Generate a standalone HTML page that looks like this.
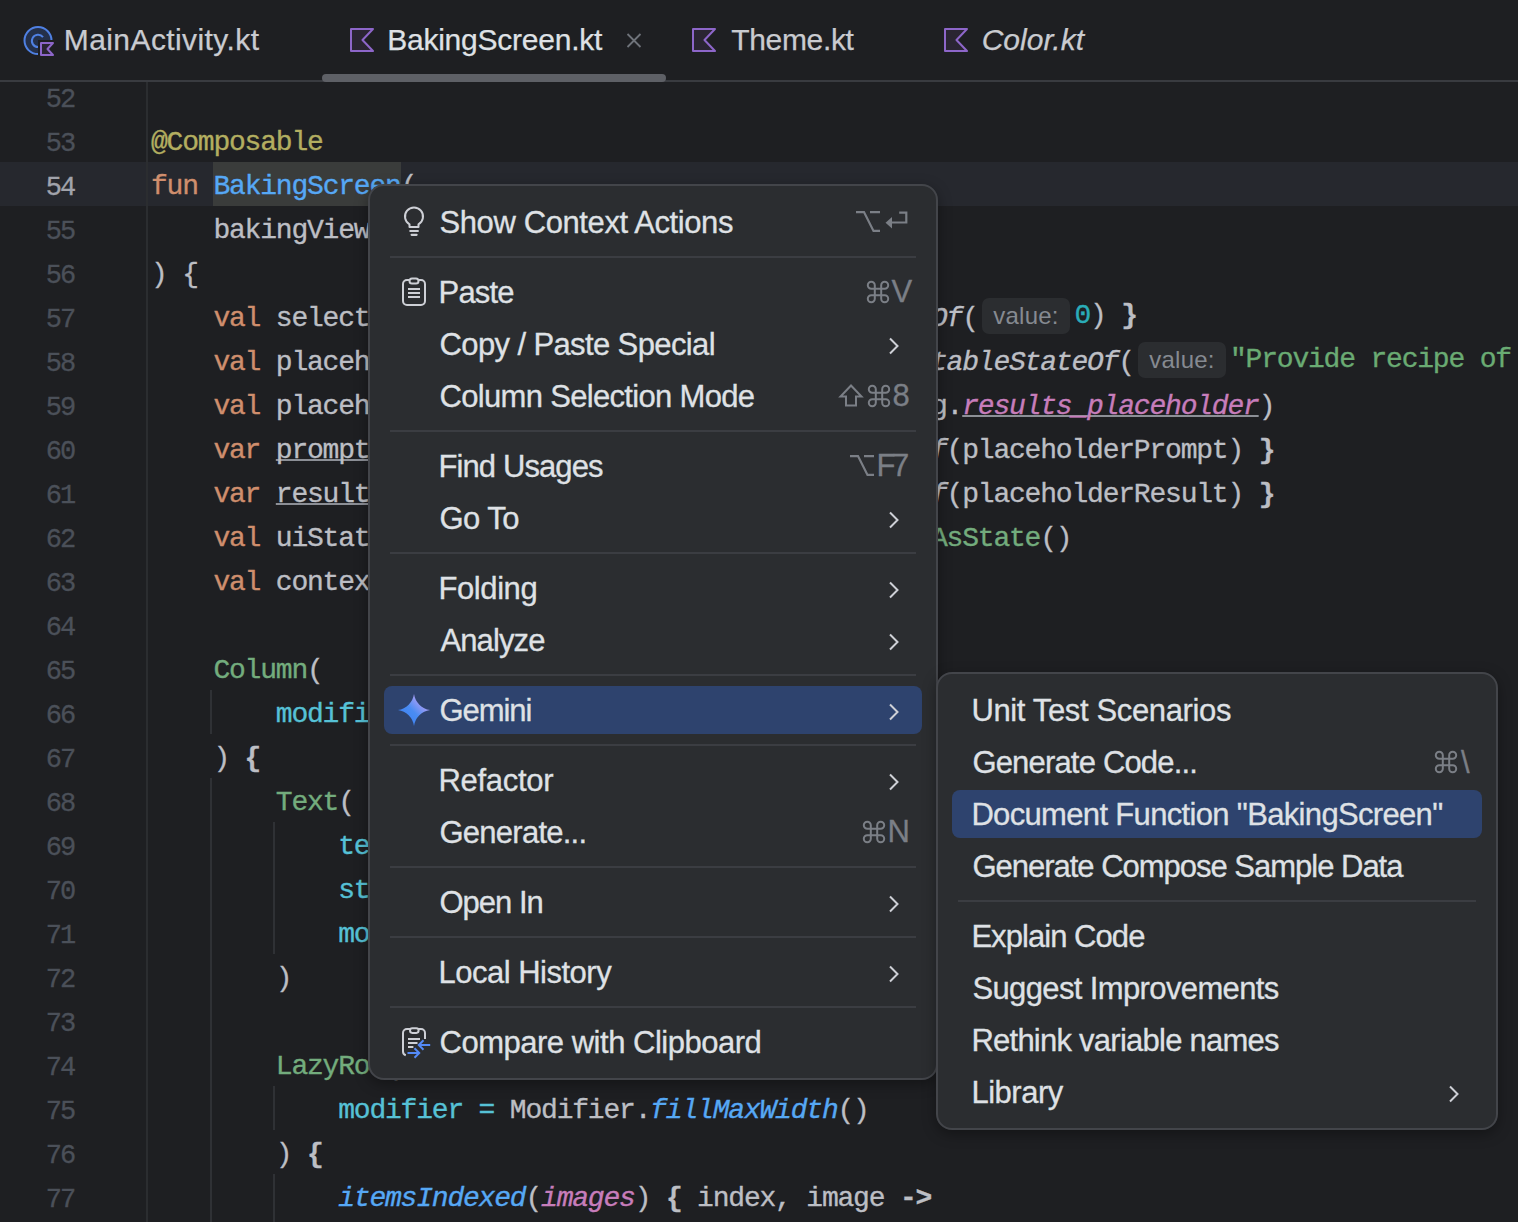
<!DOCTYPE html>
<html><head><meta charset="utf-8"><style>
html,body{margin:0;padding:0}
body{width:1518px;height:1222px;overflow:hidden;position:relative;background:#1e1f22;font-family:"Liberation Sans",sans-serif}
.cl{position:absolute;height:44px;line-height:44px;white-space:pre;font-family:"Liberation Mono",monospace;font-size:28px;letter-spacing:-1.2px;color:#bcbec4;-webkit-text-stroke:0.35px currentColor}
.ln{position:absolute;left:0;width:74.5px;text-align:right;height:44px;line-height:44px;font-family:"Liberation Mono",monospace;font-size:27px;letter-spacing:-1.8px;-webkit-text-stroke:0.3px currentColor}
.tab{position:absolute;top:18.2px;height:44px;line-height:44px;font-size:30px;color:#c9cbd0;white-space:pre;-webkit-text-stroke:0.25px currentColor}
.menu{position:absolute;box-sizing:border-box;background:#2b2d30;border:2px solid #43454a;border-radius:16px;box-shadow:0 4px 14px rgba(0,0,0,0.35)}
.mt{position:absolute;height:44px;line-height:44px;font-size:31px;white-space:pre;-webkit-text-stroke:0.3px currentColor}
.hint{position:absolute;height:36px;line-height:35px;width:88px;letter-spacing:0.25px;text-align:center;border-radius:7px;background:#2b2d30;color:#868a91;font-size:24px}
</style></head>
<body>
<div style="position:absolute;left:0;top:162px;width:1518px;height:44px;background:#26282e"></div>
<div style="position:absolute;left:213.4px;top:162px;width:187.2px;height:44px;background:#3a3c3b"></div>
<div style="position:absolute;left:146px;top:81px;width:2px;height:1141px;background:#2b2d30"></div>
<div style="position:absolute;left:210.4px;top:690px;width:2px;height:44px;background:#2f3135"></div>
<div style="position:absolute;left:210.4px;top:778px;width:2px;height:572px;background:#2f3135"></div>
<div style="position:absolute;left:272.8px;top:822px;width:2px;height:132px;background:#2f3135"></div>
<div style="position:absolute;left:272.8px;top:1086px;width:2px;height:44px;background:#2f3135"></div>
<div style="position:absolute;left:272.8px;top:1174px;width:2px;height:176px;background:#2f3135"></div>
<div class="ln" style="top:77.6px;color:#4b5059">52</div>
<div class="ln" style="top:121.6px;color:#4b5059">53</div>
<div class="ln" style="top:165.6px;color:#a1a3ab">54</div>
<div class="ln" style="top:209.6px;color:#4b5059">55</div>
<div class="ln" style="top:253.6px;color:#4b5059">56</div>
<div class="ln" style="top:297.6px;color:#4b5059">57</div>
<div class="ln" style="top:341.6px;color:#4b5059">58</div>
<div class="ln" style="top:385.6px;color:#4b5059">59</div>
<div class="ln" style="top:429.6px;color:#4b5059">60</div>
<div class="ln" style="top:473.6px;color:#4b5059">61</div>
<div class="ln" style="top:517.6px;color:#4b5059">62</div>
<div class="ln" style="top:561.6px;color:#4b5059">63</div>
<div class="ln" style="top:605.6px;color:#4b5059">64</div>
<div class="ln" style="top:649.6px;color:#4b5059">65</div>
<div class="ln" style="top:693.6px;color:#4b5059">66</div>
<div class="ln" style="top:737.6px;color:#4b5059">67</div>
<div class="ln" style="top:781.6px;color:#4b5059">68</div>
<div class="ln" style="top:825.6px;color:#4b5059">69</div>
<div class="ln" style="top:869.6px;color:#4b5059">70</div>
<div class="ln" style="top:913.6px;color:#4b5059">71</div>
<div class="ln" style="top:957.6px;color:#4b5059">72</div>
<div class="ln" style="top:1001.6px;color:#4b5059">73</div>
<div class="ln" style="top:1045.6px;color:#4b5059">74</div>
<div class="ln" style="top:1089.6px;color:#4b5059">75</div>
<div class="ln" style="top:1133.6px;color:#4b5059">76</div>
<div class="ln" style="top:1177.6px;color:#4b5059">77</div>
<div class="cl" style="left:151.00px;top:121px"><span style="color:#b3ae60;">@Composable</span></div>
<div class="cl" style="left:151.00px;top:165px"><span style="color:#cf8e6d;">fun </span><span style="color:#56a8f5;">BakingScreen</span><span style="color:#bcbec4;">(</span></div>
<div class="cl" style="left:213.40px;top:209px"><span style="color:#bcbec4;">bakingViewModel</span></div>
<div class="cl" style="left:151.00px;top:253px"><span style="color:#bcbec4;">) {</span></div>
<div class="cl" style="left:213.40px;top:297px"><span style="color:#cf8e6d;">val</span><span style="color:#bcbec4;"> selectedImage</span></div>
<div class="cl" style="left:213.40px;top:341px"><span style="color:#cf8e6d;">val</span><span style="color:#bcbec4;"> placeholderPrompt</span></div>
<div class="cl" style="left:213.40px;top:385px"><span style="color:#cf8e6d;">val</span><span style="color:#bcbec4;"> placeholderResult</span></div>
<div class="cl" style="left:213.40px;top:429px"><span style="color:#cf8e6d;">var</span><span style="color:#bcbec4;"> </span><span style="color:#bcbec4;text-decoration:underline;text-decoration-color:#8c8f96;text-underline-offset:1px;text-decoration-thickness:2px;text-decoration-skip-ink:none;">prompt</span></div>
<div class="cl" style="left:213.40px;top:473px"><span style="color:#cf8e6d;">var</span><span style="color:#bcbec4;"> </span><span style="color:#bcbec4;text-decoration:underline;text-decoration-color:#8c8f96;text-underline-offset:1px;text-decoration-thickness:2px;text-decoration-skip-ink:none;">result</span></div>
<div class="cl" style="left:213.40px;top:517px"><span style="color:#cf8e6d;">val</span><span style="color:#bcbec4;"> uiState</span></div>
<div class="cl" style="left:213.40px;top:561px"><span style="color:#cf8e6d;">val</span><span style="color:#bcbec4;"> context</span></div>
<div class="cl" style="left:213.40px;top:649px"><span style="color:#73ac7d;">Column</span><span style="color:#bcbec4;">(</span></div>
<div class="cl" style="left:275.80px;top:693px"><span style="color:#56c1d6;">modifier</span></div>
<div class="cl" style="left:213.40px;top:737px"><span style="color:#bcbec4;">) </span><span style="color:#bcbec4;font-weight:bold;">{</span></div>
<div class="cl" style="left:275.80px;top:781px"><span style="color:#73ac7d;">Text</span><span style="color:#bcbec4;">(</span></div>
<div class="cl" style="left:338.20px;top:825px"><span style="color:#56c1d6;">text</span></div>
<div class="cl" style="left:338.20px;top:869px"><span style="color:#56c1d6;">style</span></div>
<div class="cl" style="left:338.20px;top:913px"><span style="color:#56c1d6;">modifier</span></div>
<div class="cl" style="left:275.80px;top:957px"><span style="color:#bcbec4;">)</span></div>
<div class="cl" style="left:275.80px;top:1045px"><span style="color:#73ac7d;">LazyRow</span><span style="color:#bcbec4;">(</span></div>
<div class="cl" style="left:338.20px;top:1089px"><span style="color:#56c1d6;">modifier = </span><span style="color:#bcbec4;">Modifier.</span><span style="color:#56a8f5;font-style:italic;">fillMaxWidth</span><span style="color:#bcbec4;">()</span></div>
<div class="cl" style="left:275.80px;top:1133px"><span style="color:#bcbec4;">) </span><span style="color:#bcbec4;font-weight:bold;">{</span></div>
<div class="cl" style="left:338.20px;top:1177px"><span style="color:#56a8f5;font-style:italic;">itemsIndexed</span><span style="color:#bcbec4;">(</span><span style="color:#c77dbb;font-style:italic;">images</span><span style="color:#bcbec4;">) </span><span style="color:#bcbec4;font-weight:bold;">{</span><span style="color:#bcbec4;"> index, image </span><span style="color:#bcbec4;font-weight:bold;">-&gt;</span></div>
<div class="cl" style="left:931.00px;top:297px"><span style="color:#bcbec4;font-style:italic;">Of</span><span style="color:#bcbec4;">(</span></div>
<div class="cl" style="left:931.00px;top:341px"><span style="color:#bcbec4;font-style:italic;">tableStateOf</span><span style="color:#bcbec4;">(</span></div>
<div class="cl" style="left:931.00px;top:385px"><span style="color:#bcbec4;">g.</span><span style="color:#c77dbb;font-style:italic;text-decoration:underline;text-decoration-color:#8c8f96;text-underline-offset:1px;text-decoration-thickness:2px;text-decoration-skip-ink:none;">results_placeholder</span><span style="color:#bcbec4;">)</span></div>
<div class="cl" style="left:931.00px;top:429px"><span style="color:#bcbec4;font-style:italic;">f</span><span style="color:#bcbec4;">(placeholderPrompt) </span><span style="color:#bcbec4;font-weight:bold;">}</span></div>
<div class="cl" style="left:931.00px;top:473px"><span style="color:#bcbec4;font-style:italic;">f</span><span style="color:#bcbec4;">(placeholderResult) </span><span style="color:#bcbec4;font-weight:bold;">}</span></div>
<div class="cl" style="left:931.00px;top:517px"><span style="color:#73ac7d;">AsState</span><span style="color:#bcbec4;">()</span></div>
<div class="hint" style="left:982px;top:298px">value:</div>
<div class="cl" style="left:1074.5px;top:294px"><span style="color:#2aacb8;">0</span><span style="color:#bcbec4;">) </span><span style="color:#bcbec4;font-weight:bold;">}</span></div>
<div class="hint" style="left:1138px;top:342px">value:</div>
<div class="cl" style="left:1230px;top:338px"><span style="color:#6aab73;">"Provide recipe of the</span></div>
<div style="position:absolute;left:0;top:0;width:1518px;height:80px;background:#1e1f22"></div>
<div style="position:absolute;left:0;top:80px;width:1518px;height:2px;background:#393b40"></div>
<div style="position:absolute;left:322px;top:74px;width:344px;height:8px;border-radius:4px;background:#5e6066"></div>
<svg style="position:absolute;left:22px;top:24px" width="34" height="34" viewBox="0 0 34 34"><circle cx="16" cy="16.6" r="13.5" fill="#24304a" stroke="#4f80e3" stroke-width="2"/><path d="M21 13.1 A6.2 6.2 0 1 0 16 23.1" fill="none" stroke="#4f80e3" stroke-width="2"/><rect x="16" y="16" width="18" height="18" fill="#1e1f22"/><path d="M19 19 H31 L25.5 25 L31 31 H19 Z" fill="#2a2532" stroke="#8d66c9" stroke-width="2" stroke-linejoin="round"/></svg>
<div class="tab" style="left:63.8px;letter-spacing:0.411px;">MainActivity.kt</div>
<svg style="position:absolute;left:350px;top:28px" width="24" height="24" viewBox="0 0 24 24"><path d="M1 1 H23 L12.5 12 L23 23 H1 Z" fill="#2a2532" stroke="#8d66c9" stroke-width="2" stroke-linejoin="round"/></svg>
<div class="tab" style="left:387.2px;letter-spacing:-0.236px;color:#dfe1e5;">BakingScreen.kt</div>
<svg style="position:absolute;left:626px;top:33px" width="16" height="15" viewBox="0 0 16 15"><path d="M1.5 1 L14.5 14 M14.5 1 L1.5 14" stroke="#6f737a" stroke-width="1.8"/></svg>
<svg style="position:absolute;left:692px;top:28px" width="24" height="24" viewBox="0 0 24 24"><path d="M1 1 H23 L12.5 12 L23 23 H1 Z" fill="#2a2532" stroke="#8d66c9" stroke-width="2" stroke-linejoin="round"/></svg>
<div class="tab" style="left:731.2px;letter-spacing:-0.329px;">Theme.kt</div>
<svg style="position:absolute;left:944px;top:28px" width="24" height="24" viewBox="0 0 24 24"><path d="M1 1 H23 L12.5 12 L23 23 H1 Z" fill="#2a2532" stroke="#8d66c9" stroke-width="2" stroke-linejoin="round"/></svg>
<div class="tab" style="left:981.7px;letter-spacing:0.014px;font-style:italic;">Color.kt</div>
<div class="menu" style="left:368px;top:184px;width:570px;height:896px"></div>
<div class="mt" style="left:439.5px;top:200.7px;letter-spacing:-0.4px;color:#dfe1e5">Show Context Actions</div>
<svg style="position:absolute;left:856px;top:211px;overflow:visible" width="24" height="21" viewBox="0 0 24 21"><path d="M0 1.1 H8 L17.5 19.9 H24 M14 1.1 H24" fill="none" stroke="#7b7f86" stroke-width="2.2"/></svg><svg style="position:absolute;left:886px;top:211px;overflow:visible" width="23" height="18" viewBox="0 0 23 18"><path d="M13.2 1.6 H20.3 V11.5 H5.6" fill="none" stroke="#7b7f86" stroke-width="2.2"/><path d="M-0.5 11.7 L6 5.9 V17.5 Z" fill="#7b7f86"/></svg>
<svg style="position:absolute;left:400px;top:204px;overflow:visible" width="28" height="34" viewBox="0 0 28 34"><path d="M9.5 23 V20.3 A9 9 0 1 1 18.5 20.3 V23 Z" fill="none" stroke="#ced0d6" stroke-width="2" stroke-linejoin="round"/><path d="M10.3 27 H17.9 M11.6 30.8 H16.6" stroke="#ced0d6" stroke-width="2.2" stroke-linecap="round"/></svg>
<div style="position:absolute;left:390px;top:256px;width:526px;height:2px;background:#3b3d42"></div>
<div class="mt" style="left:438.5px;top:270.7px;letter-spacing:-0.8px;color:#dfe1e5">Paste</div>
<svg style="position:absolute;left:867px;top:280.5px;overflow:visible" width="22" height="22" viewBox="0 0 22 22"><path d="M7.8 17.7 V4.3 A3.5 3.5 0 1 0 4.3 7.8 H17.7 A3.5 3.5 0 1 0 14.2 4.3 V17.7 A3.5 3.5 0 1 0 17.7 14.2 H4.3 A3.5 3.5 0 1 0 7.8 17.7 Z" fill="none" stroke="#7b7f86" stroke-width="2"/></svg><div class="mt" style="left:891.5px;top:270.2px;color:#7b7f86">V</div>
<svg style="position:absolute;left:400px;top:276px;overflow:visible" width="28" height="32" viewBox="0 0 28 32"><rect x="3" y="4" width="22" height="25" rx="4" fill="none" stroke="#ced0d6" stroke-width="2"/><rect x="9.5" y="2.5" width="9" height="5" rx="2.5" fill="#2b2d30" stroke="#ced0d6" stroke-width="2"/><path d="M8 13 H20 M8 17 H20 M8 21 H20" stroke="#ced0d6" stroke-width="2"/></svg>
<div class="mt" style="left:439.5px;top:322.7px;letter-spacing:-0.616px;color:#dfe1e5">Copy / Paste Special</div>
<svg style="position:absolute;left:887.5px;top:336.8px" width="12" height="18" viewBox="0 0 12 18"><path d="M2 1.5 L9.5 9 L2 16.5" fill="none" stroke="#ced0d6" stroke-width="2"/></svg>
<div class="mt" style="left:439.5px;top:374.7px;letter-spacing:-0.68px;color:#dfe1e5">Column Selection Mode</div>
<svg style="position:absolute;left:838.6px;top:383.5px;overflow:visible" width="24" height="23" viewBox="0 0 24 23"><path d="M12 1.5 L22.5 12.5 H17 V21.5 H7 V12.5 H1.5 Z" fill="none" stroke="#7b7f86" stroke-width="2" stroke-linejoin="miter"/></svg><svg style="position:absolute;left:868px;top:384.5px;overflow:visible" width="22" height="22" viewBox="0 0 22 22"><path d="M7.8 17.7 V4.3 A3.5 3.5 0 1 0 4.3 7.8 H17.7 A3.5 3.5 0 1 0 14.2 4.3 V17.7 A3.5 3.5 0 1 0 17.7 14.2 H4.3 A3.5 3.5 0 1 0 7.8 17.7 Z" fill="none" stroke="#7b7f86" stroke-width="2"/></svg><div class="mt" style="left:892.5px;top:374.2px;color:#7b7f86">8</div>
<div style="position:absolute;left:390px;top:430px;width:526px;height:2px;background:#3b3d42"></div>
<div class="mt" style="left:438.5px;top:444.7px;letter-spacing:-0.9px;color:#dfe1e5">Find Usages</div>
<svg style="position:absolute;left:850px;top:455px;overflow:visible" width="24" height="21" viewBox="0 0 24 21"><path d="M0 1.1 H8 L17.5 19.9 H24 M14 1.1 H24" fill="none" stroke="#7b7f86" stroke-width="2.2"/></svg><div class="mt" style="left:876.5px;top:444.2px;color:#7b7f86">F</div><div class="mt" style="left:892px;top:444.2px;color:#7b7f86">7</div>
<div class="mt" style="left:439.5px;top:496.7px;letter-spacing:-0.55px;color:#dfe1e5">Go To</div>
<svg style="position:absolute;left:887.5px;top:510.8px" width="12" height="18" viewBox="0 0 12 18"><path d="M2 1.5 L9.5 9 L2 16.5" fill="none" stroke="#ced0d6" stroke-width="2"/></svg>
<div style="position:absolute;left:390px;top:552px;width:526px;height:2px;background:#3b3d42"></div>
<div class="mt" style="left:438.5px;top:566.7px;letter-spacing:-0.417px;color:#dfe1e5">Folding</div>
<svg style="position:absolute;left:887.5px;top:580.8px" width="12" height="18" viewBox="0 0 12 18"><path d="M2 1.5 L9.5 9 L2 16.5" fill="none" stroke="#ced0d6" stroke-width="2"/></svg>
<div class="mt" style="left:440.5px;top:618.7px;letter-spacing:-0.9px;color:#dfe1e5">Analyze</div>
<svg style="position:absolute;left:887.5px;top:632.8px" width="12" height="18" viewBox="0 0 12 18"><path d="M2 1.5 L9.5 9 L2 16.5" fill="none" stroke="#ced0d6" stroke-width="2"/></svg>
<div style="position:absolute;left:390px;top:674px;width:526px;height:2px;background:#3b3d42"></div>
<div style="position:absolute;left:384px;top:686px;width:538px;height:48px;border-radius:8px;background:#2e436e"></div>
<div class="mt" style="left:439.5px;top:688.7px;letter-spacing:-1.08px;color:#dfe1e5">Gemini</div>
<svg style="position:absolute;left:887.5px;top:702.8px" width="12" height="18" viewBox="0 0 12 18"><path d="M2 1.5 L9.5 9 L2 16.5" fill="none" stroke="#ced0d6" stroke-width="2"/></svg>
<svg style="position:absolute;left:398px;top:694px;overflow:visible" width="32" height="32" viewBox="0 0 32 32"><defs><linearGradient id="gg" x1="0.15" y1="0.85" x2="0.85" y2="0.15"><stop offset="0" stop-color="#3b82f6"/><stop offset="0.45" stop-color="#4a8cf2"/><stop offset="1" stop-color="#c7a4f7"/></linearGradient></defs><path d="M16 32 A19 19 0 0 0 0 16 A19 19 0 0 0 16 0 A19 19 0 0 0 32 16 A19 19 0 0 0 16 32 Z" fill="url(#gg)"/></svg>
<div style="position:absolute;left:390px;top:744px;width:526px;height:2px;background:#3b3d42"></div>
<div class="mt" style="left:438.5px;top:758.7px;letter-spacing:-0.314px;color:#dfe1e5">Refactor</div>
<svg style="position:absolute;left:887.5px;top:772.8px" width="12" height="18" viewBox="0 0 12 18"><path d="M2 1.5 L9.5 9 L2 16.5" fill="none" stroke="#ced0d6" stroke-width="2"/></svg>
<div class="mt" style="left:439.5px;top:810.7px;letter-spacing:-0.75px;color:#dfe1e5">Generate...</div>
<svg style="position:absolute;left:863px;top:820.5px;overflow:visible" width="22" height="22" viewBox="0 0 22 22"><path d="M7.8 17.7 V4.3 A3.5 3.5 0 1 0 4.3 7.8 H17.7 A3.5 3.5 0 1 0 14.2 4.3 V17.7 A3.5 3.5 0 1 0 17.7 14.2 H4.3 A3.5 3.5 0 1 0 7.8 17.7 Z" fill="none" stroke="#7b7f86" stroke-width="2"/></svg><div class="mt" style="left:887.5px;top:810.2px;color:#7b7f86">N</div>
<div style="position:absolute;left:390px;top:866px;width:526px;height:2px;background:#3b3d42"></div>
<div class="mt" style="left:439.5px;top:880.7px;letter-spacing:-1.0px;color:#dfe1e5">Open In</div>
<svg style="position:absolute;left:887.5px;top:894.8px" width="12" height="18" viewBox="0 0 12 18"><path d="M2 1.5 L9.5 9 L2 16.5" fill="none" stroke="#ced0d6" stroke-width="2"/></svg>
<div style="position:absolute;left:390px;top:936px;width:526px;height:2px;background:#3b3d42"></div>
<div class="mt" style="left:438.5px;top:950.7px;letter-spacing:-0.5px;color:#dfe1e5">Local History</div>
<svg style="position:absolute;left:887.5px;top:964.8px" width="12" height="18" viewBox="0 0 12 18"><path d="M2 1.5 L9.5 9 L2 16.5" fill="none" stroke="#ced0d6" stroke-width="2"/></svg>
<div style="position:absolute;left:390px;top:1006px;width:526px;height:2px;background:#3b3d42"></div>
<div class="mt" style="left:439.5px;top:1020.7px;letter-spacing:-0.486px;color:#dfe1e5">Compare with Clipboard</div>
<svg style="position:absolute;left:400px;top:1026px;overflow:visible" width="32" height="32" viewBox="0 0 32 32"><path d="M25 13 V7 A4 4 0 0 0 21 3 H7 A4 4 0 0 0 3 7 V25.5 A4 4 0 0 0 5.8 29.3" fill="none" stroke="#ced0d6" stroke-width="2"/><rect x="10" y="2.3" width="8.6" height="4.6" rx="2.3" fill="#2b2d30" stroke="#ced0d6" stroke-width="2"/><path d="M8 13 H20 M8 17 H17.5 M8 21 H13.4" stroke="#ced0d6" stroke-width="2"/><path d="M30.2 19 H18.5 M23.5 14.3 L18.8 19 L23.5 23.7 M7.5 27 H19.5 M14.5 22.3 L19.2 27 L14.5 31.7" fill="none" stroke="#548af7" stroke-width="2"/></svg>
<div class="menu" style="left:936px;top:672px;width:562px;height:458px"></div>
<div class="mt" style="left:971.4px;top:688.7px;letter-spacing:-0.356px;color:#dfe1e5">Unit Test Scenarios</div>
<div class="mt" style="left:972.4px;top:740.7px;letter-spacing:-0.82px;color:#dfe1e5">Generate Code...</div>
<svg style="position:absolute;left:1435px;top:750.5px;overflow:visible" width="22" height="22" viewBox="0 0 22 22"><path d="M7.8 17.7 V4.3 A3.5 3.5 0 1 0 4.3 7.8 H17.7 A3.5 3.5 0 1 0 14.2 4.3 V17.7 A3.5 3.5 0 1 0 17.7 14.2 H4.3 A3.5 3.5 0 1 0 7.8 17.7 Z" fill="none" stroke="#7b7f86" stroke-width="2"/></svg><div class="mt" style="left:1461px;top:741.2px;color:#7b7f86">\</div>
<div style="position:absolute;left:952px;top:790px;width:530px;height:48px;border-radius:8px;background:#2e436e"></div>
<div class="mt" style="left:971.4px;top:792.7px;letter-spacing:-0.665px;color:#dfe1e5">Document Function "BakingScreen"</div>
<div class="mt" style="left:972.4px;top:844.7px;letter-spacing:-1.011px;color:#dfe1e5">Generate Compose Sample Data</div>
<div style="position:absolute;left:958px;top:900px;width:518px;height:2px;background:#3b3d42"></div>
<div class="mt" style="left:971.4px;top:914.7px;letter-spacing:-0.945px;color:#dfe1e5">Explain Code</div>
<div class="mt" style="left:972.4px;top:966.7px;letter-spacing:-0.621px;color:#dfe1e5">Suggest Improvements</div>
<div class="mt" style="left:971.4px;top:1018.7px;letter-spacing:-0.752px;color:#dfe1e5">Rethink variable names</div>
<div class="mt" style="left:971.4px;top:1070.7px;letter-spacing:-0.467px;color:#dfe1e5">Library</div>
<svg style="position:absolute;left:1447.5px;top:1084.8px" width="12" height="18" viewBox="0 0 12 18"><path d="M2 1.5 L9.5 9 L2 16.5" fill="none" stroke="#ced0d6" stroke-width="2"/></svg>
</body></html>
